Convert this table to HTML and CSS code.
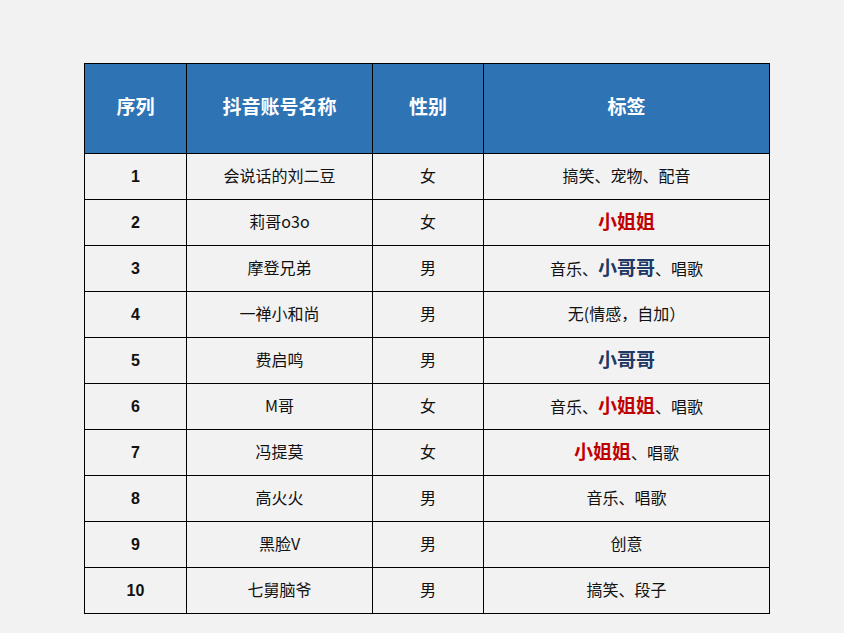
FILE: index.html
```html
<!DOCTYPE html>
<html lang="zh-CN">
<head>
<meta charset="utf-8">
<title>抖音账号</title>
<link rel="stylesheet" href="styles.css">
</head>
<body>
<main class="page">
  <table class="accounts">
    <colgroup>
      <col class="c-idx">
      <col class="c-name">
      <col class="c-sex">
      <col class="c-tag">
    </colgroup>
    <thead>
      <tr class="head">
        <th>序列</th>
        <th>抖音账号名称</th>
        <th>性别</th>
        <th>标签</th>
      </tr>
    </thead>
    <tbody>
      <tr><td class="idx">1</td><td>会说话的刘二豆</td><td>女</td><td>搞笑、宠物、配音</td></tr>
      <tr><td class="idx">2</td><td>莉哥o3o</td><td>女</td><td><span class="girl">小姐姐</span></td></tr>
      <tr><td class="idx">3</td><td>摩登兄弟</td><td>男</td><td>音乐、<span class="boy">小哥哥</span>、唱歌</td></tr>
      <tr><td class="idx">4</td><td>一禅小和尚</td><td>男</td><td>无(情感，自加）</td></tr>
      <tr><td class="idx">5</td><td>费启鸣</td><td>男</td><td><span class="boy">小哥哥</span></td></tr>
      <tr><td class="idx">6</td><td>M哥</td><td>女</td><td>音乐、<span class="girl">小姐姐</span>、唱歌</td></tr>
      <tr><td class="idx">7</td><td>冯提莫</td><td>女</td><td><span class="girl">小姐姐</span>、唱歌</td></tr>
      <tr><td class="idx">8</td><td>高火火</td><td>男</td><td>音乐、唱歌</td></tr>
      <tr><td class="idx">9</td><td>黑脸V</td><td>男</td><td>创意</td></tr>
      <tr><td class="idx">10</td><td>七舅脑爷</td><td>男</td><td>搞笑、段子</td></tr>
    </tbody>
  </table>
</main>
</body>
</html>
```

FILE: styles.css
```css
html, body {
  margin: 0;
  padding: 0;
  background: #f2f2f2;
}

.page {
  padding: 63px 0 0 84px;
  font-family: "Noto Sans CJK SC", "Noto Sans", sans-serif;
  color: #111;
}

.accounts {
  border-collapse: collapse;
  table-layout: fixed;
  width: 686px;
}

.c-idx { width: 102px; }
.c-name { width: 186px; }
.c-sex { width: 111px; }
.c-tag { width: 286px; }

.accounts th,
.accounts td {
  border: 1px solid #000;
  padding: 0 0 4px;
  text-align: center;
  vertical-align: middle;
  line-height: 1;
}

.accounts tr {
  height: 46px;
}

.accounts tr.head {
  height: 90px;
}

.accounts th {
  background: #2e74b5;
  color: #fff;
  font-size: 19px;
  font-weight: 700;
  padding-bottom: 6px;
}

.accounts td {
  font-size: 16px;
}

.accounts td.idx {
  font-family: "Liberation Sans", "Noto Sans", sans-serif;
  font-weight: 700;
  font-size: 16px;
  padding-bottom: 0;
}

.girl {
  color: #c00000;
  font-weight: 700;
  font-size: 19px;
}

.boy {
  color: #1f3864;
  font-weight: 700;
  font-size: 19px;
}
```
